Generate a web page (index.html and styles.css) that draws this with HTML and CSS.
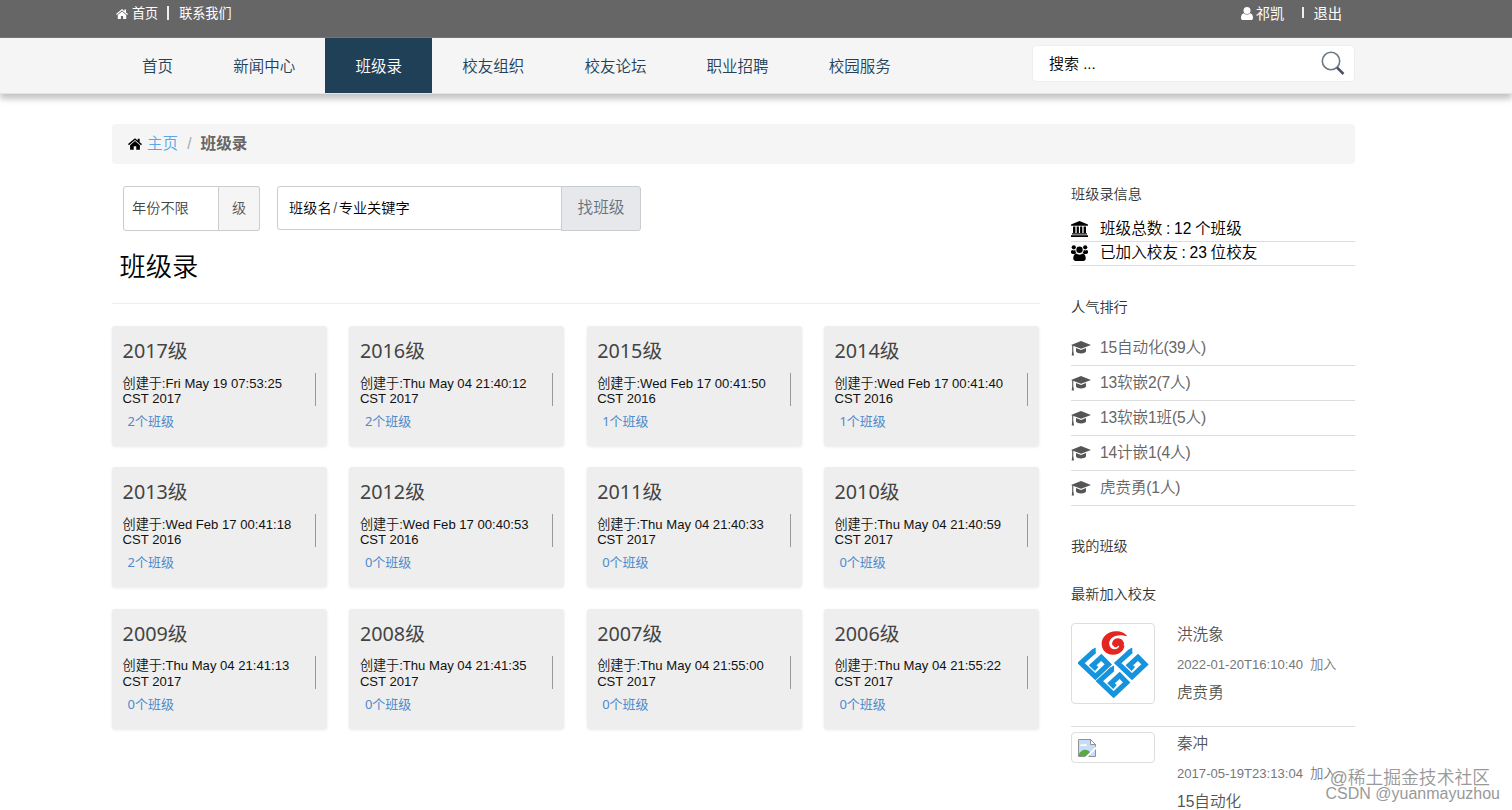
FILE: index.html
```html
<!DOCTYPE html>
<html lang="zh-CN">
<head>
<meta charset="utf-8">
<title>班级录</title>
<link rel="stylesheet" href="styles.css">
</head>
<body>
<svg class="defs" width="0" height="0">
  <symbol id="home" viewBox="0 0 24 20"><path d="M12 0 0 10.2l1.6 1.8L12 3.2 22.4 12l1.6-1.8-4-3.4V1h-3.4v3z"/><path d="M12 5 3.6 12v8h6.2v-6h4.4v6h6.2v-8z"/></symbol>
  <symbol id="cap" viewBox="0 0 20 15"><path d="M10 0 20 4 10 7.8 0 4z"/><path d="M5 7v3.6c1 2.6 9 2.6 10 0V7l-5 2z"/><path d="M1.2 4h1.1v6l.7 4.500H.7l.5-4.500z"/></symbol>
  <symbol id="gmark" viewBox="0 0 110 100"><path d="M54 10 14 46 57 87 96 50 75 29 49 53 61 64" fill="none" stroke="#1593dc" stroke-width="15.500"/><path d="M40 12 58-2v18z" fill="#1593dc"/></symbol>
</svg>
<header class="topbar">
  <div class="container top-row">
    <div class="top-left"><svg class="i-home"><use href="#home"/></svg><span>首页</span><i class="bar"></i><span>联系我们</span></div>
    <div class="top-right"><svg class="i-user" viewBox="0 0 12 13"><circle cx="6" cy="3.500" r="3.500"/><path d="M2.600 6.300C.7 7 0 8.700 0 11.200 0 12.300.8 13 2 13h8c1.200 0 2-.7 2-1.800 0-2.500-.7-4.200-2.600-4.900-1.800 1.700-5 1.700-6.800 0z"/></svg><span>祁凯</span><i class="bar thin"></i><span>退出</span></div>
  </div>
</header>
<nav class="navbar">
  <div class="container nav-row">
    <div class="menu"><a>首页</a><a>新闻中心</a><a class="active">班级录</a><a>校友组织</a><a>校友论坛</a><a>职业招聘</a><a>校园服务</a></div>
    <div class="search"><span>搜索 ...</span><svg class="i-search" viewBox="0 0 24 24" fill="none"><circle cx="10" cy="10" r="8.700" stroke="#697985" stroke-width="1.600"/><path d="m16 16.500 6.500 6.500" stroke="#4c5264" stroke-width="2.500"/></svg></div>
  </div>
</nav>
<div class="container">
  <div class="crumb"><svg class="i-home dark"><use href="#home"/></svg><a>主页</a><i>/</i><b>班级录</b></div>
  <div class="columns">
    <main class="main">
      <div class="filters">
        <div class="group year"><span class="field">年份不限</span><span class="addon">级</span></div>
        <div class="group keyword"><span class="field">班级名<i>/</i>专业关键字</span><span class="button">找班级</span></div>
      </div>
      <h1>班级录</h1>
      <div class="cards">
        <article class="card"><h2>2017级</h2><p>创建于:Fri May 19 07:53:25<br>CST 2017</p><a>2个班级</a></article>
        <article class="card"><h2>2016级</h2><p>创建于:Thu May 04 21:40:12<br>CST 2017</p><a>2个班级</a></article>
        <article class="card"><h2>2015级</h2><p>创建于:Wed Feb 17 00:41:50<br>CST 2016</p><a>1个班级</a></article>
        <article class="card"><h2>2014级</h2><p>创建于:Wed Feb 17 00:41:40<br>CST 2016</p><a>1个班级</a></article>
        <article class="card"><h2>2013级</h2><p>创建于:Wed Feb 17 00:41:18<br>CST 2016</p><a>2个班级</a></article>
        <article class="card"><h2>2012级</h2><p>创建于:Wed Feb 17 00:40:53<br>CST 2016</p><a>0个班级</a></article>
        <article class="card"><h2>2011级</h2><p>创建于:Thu May 04 21:40:33<br>CST 2017</p><a>0个班级</a></article>
        <article class="card"><h2>2010级</h2><p>创建于:Thu May 04 21:40:59<br>CST 2017</p><a>0个班级</a></article>
        <article class="card"><h2>2009级</h2><p>创建于:Thu May 04 21:41:13<br>CST 2017</p><a>0个班级</a></article>
        <article class="card"><h2>2008级</h2><p>创建于:Thu May 04 21:41:35<br>CST 2017</p><a>0个班级</a></article>
        <article class="card"><h2>2007级</h2><p>创建于:Thu May 04 21:55:00<br>CST 2017</p><a>0个班级</a></article>
        <article class="card"><h2>2006级</h2><p>创建于:Thu May 04 21:55:22<br>CST 2017</p><a>0个班级</a></article>
      </div>
    </main>
    <aside class="side">
      <h3>班级录信息</h3>
      <ul class="info">
        <li><svg viewBox="0 0 17 16"><path d="M8.500 0 17 3.500v1.200H0V3.500zM2 5.500h2.400V12H2zm3.700 0h2.200V12H5.700zm3.400 0h2.200V12H9.100zm3.500 0H15V12h-2.400zM1 12.300h15v1.200H1zm-1 1.900h17V16H0z"/></svg><span>班级总数 : 12 个班级</span></li>
        <li><svg viewBox="0 0 17 16"><circle cx="2.800" cy="2.300" r="2.100"/><circle cx="14.200" cy="2.300" r="2.100"/><circle cx="8.500" cy="4.800" r="3.200"/><path d="M1 4.900C0 5.300 0 6.500 0 7.600 0 8.500.8 9 1.700 9h2.300c.3-.6.7-1 1.200-1.300A4 4 0 0 1 4.300 5C3 5.600 2 5.500 1 4.900zM16 4.900c1 .4 1 1.600 1 2.700 0 .9-.8 1.400-1.700 1.400H13c-.3-.6-.7-1-1.200-1.300A4 4 0 0 0 12.700 5c1.300.6 2.300.5 3.300-.1zM5.100 8.600C3 9.200 2.300 11 2.300 13.500 2.300 15 3.300 16 4.700 16h7.600c1.400 0 2.400-1 2.400-2.500 0-2.500-.7-4.300-2.800-4.900-2 1.500-4.800 1.500-6.800 0z"/></svg><span>已加入校友 : 23 位校友</span></li>
      </ul>
      <h3 class="h-rank">人气排行</h3>
      <ul class="rank">
        <li><svg><use href="#cap"/></svg><span>15自动化(39人)</span></li>
        <li><svg><use href="#cap"/></svg><span>13软嵌2(7人)</span></li>
        <li><svg><use href="#cap"/></svg><span>13软嵌1班(5人)</span></li>
        <li><svg><use href="#cap"/></svg><span>14计嵌1(4人)</span></li>
        <li><svg><use href="#cap"/></svg><span>虎贲勇(1人)</span></li>
      </ul>
      <h3 class="h-mine">我的班级</h3>
      <h3 class="h-new">最新加入校友</h3>
      <div class="member">
        <div class="thumb"><svg width="72" height="68" viewBox="54 40 216 204"><use href="#gmark" x="49" y="93" width="110" height="100"/><use href="#gmark" x="159" y="93" width="110" height="100"/><use href="#gmark" x="104" y="147" width="110" height="100"/><path d="M202 59C190 40 151 37 132 60c-16 21-4 55 28 54 22 0 38-18 32-36-6-17-30-17-35-1-4 12 10 20 18 11-2 14-24 13-27-4-3-20 19-36 54-25z" fill="#e52620"/><path d="M151 84c-2-16 12-26 27-22 12 3 19 14 15 25M158 87c3 10 14 11 18 1" fill="none" stroke="#fff" stroke-width="4"/></svg></div>
        <div class="who"><p class="name">洪洗象</p><p class="time">2022-01-20T16:10:40&nbsp; 加入</p><p class="class">虎贲勇</p></div>
      </div>
      <div class="member second">
        <div class="thumb broken"><svg width="18" height="18" viewBox="0 0 18 18"><path d="M.5.500h12l5 5v12H.5z" fill="#c7dcf7" stroke="#929292"/><path d="M2 7c0-2 3-2 3-1 1-2 4-1 4 1z" fill="#fff"/><path d="M1 17v-2c2-4 7-6 11-2v4z" fill="#58a943"/><path d="M12.500.500v5h5z" fill="#fff" stroke="#929292"/><path d="m10 18 8-8v-2.500L7 18z" fill="#fff"/></svg></div>
        <div class="who"><p class="name">秦冲</p><p class="time">2017-05-19T23:13:04&nbsp; 加入</p><p class="class">15自动化</p></div>
      </div>
    </aside>
  </div>
</div>
<div class="watermark"><span class="juejin">@稀土掘金技术社区</span><span class="csdn">CSDN @yuanmayuzhou</span></div>
</body>
</html>
```

FILE: styles.css
```css
* { box-sizing: border-box; }
body { margin: 0; height: 810px; overflow: hidden; background: #fff; color: #111; font: 350 15.6px/20px "Liberation Sans", "Noto Sans CJK SC", sans-serif; position: relative; }
h1, h2, h3, p, ul { margin: 0; padding: 0; font-weight: 350; list-style: none; }
i { font-style: normal; }
svg { flex: none; }
.defs { position: absolute; }
.container { width: 1243px; margin-left: 112px; }

.topbar { height: 38px; background: #666; border-bottom: 1px solid #777; color: #fff; font-size: 13.1px; font-weight: 400; }
.top-row, .top-left, .top-right { display: flex; align-items: center; }
.top-row { justify-content: space-between; height: 27px; padding: 0 13px 0 4px; }
.i-home { width: 12px; height: 10px; fill: #fff; margin-right: 4px; }
.i-user { width: 12px; height: 13px; fill: #fff; margin-right: 3px; }
.bar { width: 2px; height: 14px; background: #eee; margin: 0 10px 0 9px; transform: translateY(-1px); }
.bar.thin { width: 2px; height: 11px; margin: 0 9px 0 18px; }
.top-right { font-size: 14.3px; }

.navbar { height: 56px; background: #f5f5f5; border-bottom: 1px solid #e4e4e4; box-shadow: 0 5px 6px rgba(0,0,0,.23); }
.nav-row { display: flex; justify-content: space-between; }
.menu { display: flex; }
.menu a { height: 55px; padding: 0 30.1px; line-height: 57px; color: #234158; font-size: 15.5px; }
.menu .active { background: #1f4057; color: #fff; }
.search { display: flex; justify-content: space-between; width: 323px; height: 37px; margin-top: 7px; padding: 6px 9px 0 16px; background: #fff; border: 1px solid #eee; border-radius: 4px; font-size: 15px; line-height: 24px; color: #000; }
.i-search { width: 24px; height: 24px; margin-top: -1px; }

.crumb { display: flex; align-items: center; height: 40px; margin-top: 30px; padding-left: 16px; background: #f5f5f5; border-radius: 4px; color: #777; line-height: 22px; }
.crumb .dark { width: 14px; height: 12px; fill: #000; margin-right: 5px; }
.crumb a { color: #5aa6ea; }
.crumb i { margin: 0 9px; color: #aaa; }
.crumb b { color: #666; font-weight: 700; }

.columns { display: flex; justify-content: space-between; }
.main { width: 928px; }
.filters { display: flex; gap: 17px; padding: 22px 0 0 11px; }
.group { display: flex; height: 45px; font-size: 14.2px; line-height: 43px; }
.field { border: 1px solid #ccc; border-radius: 3px 0 0 3px; }
.year .field { width: 96px; padding-left: 8px; color: #444; }
.addon { width: 41px; border: 1px solid #ccc; border-left: 0; background: #f5f5f5; text-align: center; color: #555; border-radius: 0 3px 3px 0; }
.keyword .field { width: 285px; height: 44px; padding-left: 11px; color: #000; }
.keyword i { margin: 0 1.6px; color: #555; }
.button { width: 80px; margin-left: -1px; border: 1px solid #c8ccd0; border-radius: 0 3px 3px 0; background: #e6e8eb; color: #66727c; text-align: center; font-size: 15.7px; line-height: 42px; }
h1 { height: 73px; padding-left: 7.5px; font-size: 26.3px; line-height: 72px; color: #000; border-bottom: 1px solid #eee; }
.cards { display: grid; grid-template-columns: repeat(4, 215.2px); grid-auto-rows: 120px; column-gap: 22.1px; row-gap: 21.3px; margin-top: 22px; }
.card { padding: 13px 11px 0 10.6px; background: #eee; border-radius: 3px; box-shadow: 0 1px 3px rgba(0,0,0,.09); }
.card h2 { font: 400 19.8px/24px "Noto Sans", "Noto Sans CJK SC", sans-serif; color: #444; }
.card p { height: 33px; margin-top: 10px; border-right: 1px solid #999; font-size: 13.1px; line-height: 15.6px; font-weight: 350; color: #111; white-space: nowrap; padding-top: 2.5px; }
.card a { display: block; margin: 5px 0 0 5px; font: 400 13px/20px "Noto Sans", "Noto Sans CJK SC", sans-serif; color: #4f8acb; }

.side { width: 284px; padding-top: 20px; color: #666; }
h3 { font-size: 14.2px; line-height: 20px; color: #333; }
.side li { display: flex; align-items: center; border-bottom: 1px solid #ddd; }
.info { margin-top: 13px; }
.info li { height: 24px; color: #000; font-size: 15.6px; word-spacing: -.7px; }
.info li:first-child { height: 24.5px; }
.info svg { width: 17px; height: 16px; margin-right: 12px; }
.h-rank { margin-top: 31.5px; }
.rank { margin-top: 14px; }
.rank li { height: 35px; letter-spacing: -.15px; }
.rank svg { width: 20px; height: 15px; margin-right: 9px; fill: #555; }
.h-mine { margin-top: 30px; }
.h-new { margin-top: 28px; }
.member { display: flex; gap: 22px; height: 104px; margin-top: 19px; border-bottom: 1px solid #ddd; }
.thumb { display: flex; width: 84px; height: 81px; padding: 6px; border: 1px solid #ddd; border-radius: 4px; align-items: center; }
.thumb.broken { height: 31px; }
.member.second { margin-top: 5px; border: 0; }
.member p { white-space: nowrap; line-height: 24px; }
.who .time { margin-top: 6px; font-size: 13.1px; color: #777; }
.who .class { margin-top: 4px; color: #555; }
.member .name { line-height: 24px; color: #555; }

.watermark { position: absolute; right: 12px; bottom: 8px; display: flex; flex-direction: column; align-items: flex-end; line-height: 16px; color: #999; white-space: nowrap; text-shadow: 1px 1px 1px #fff; }
.juejin { font-size: 17.8px; margin-right: 10px; }
.csdn { font-size: 16px; }
```
